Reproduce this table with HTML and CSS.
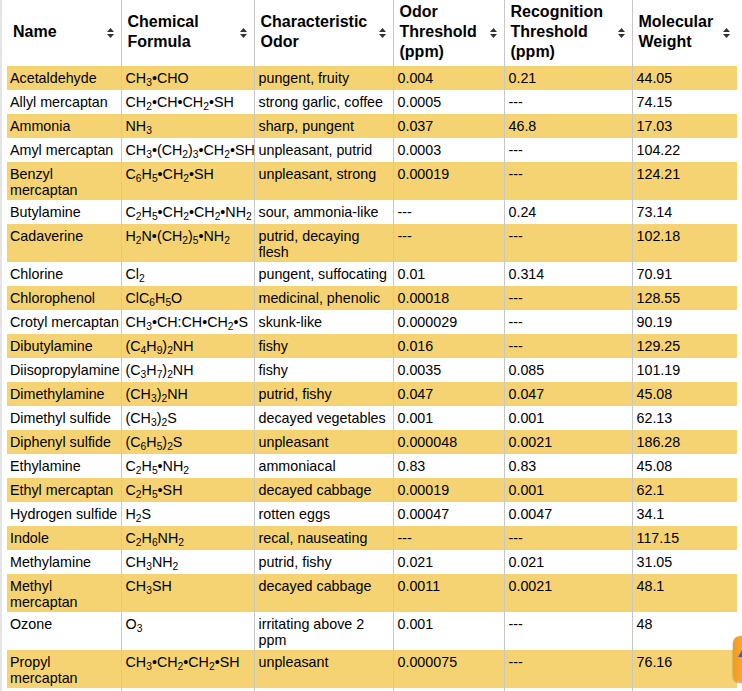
FILE: index.html
```html
<!DOCTYPE html>
<html>
<head>
<meta charset="utf-8">
<title>Odor thresholds</title>
<link rel="stylesheet" href="styles.css">
</head>
<body>
<div class="page">
<table class="odors">
<colgroup>
<col class="c-name"><col class="c-formula"><col class="c-odor"><col class="c-thr"><col class="c-rec"><col class="c-mw">
</colgroup>
<thead>
<tr>
<th>Name<span class="sort"><svg width="7" height="10" viewBox="0 0 7 10"><path d="M3.5 0L7 4H0Z M0 6H7L3.5 10Z" fill="#333"/></svg></span></th>
<th>Chemical Formula<span class="sort"><svg width="7" height="10" viewBox="0 0 7 10"><path d="M3.5 0L7 4H0Z M0 6H7L3.5 10Z" fill="#333"/></svg></span></th>
<th>Characteristic Odor<span class="sort"><svg width="7" height="10" viewBox="0 0 7 10"><path d="M3.5 0L7 4H0Z M0 6H7L3.5 10Z" fill="#333"/></svg></span></th>
<th>Odor Threshold (ppm)<span class="sort"><svg width="7" height="10" viewBox="0 0 7 10"><path d="M3.5 0L7 4H0Z M0 6H7L3.5 10Z" fill="#333"/></svg></span></th>
<th>Recognition Threshold (ppm)<span class="sort"><svg width="7" height="10" viewBox="0 0 7 10"><path d="M3.5 0L7 4H0Z M0 6H7L3.5 10Z" fill="#333"/></svg></span></th>
<th>Molecular Weight<span class="sort"><svg width="7" height="10" viewBox="0 0 7 10"><path d="M3.5 0L7 4H0Z M0 6H7L3.5 10Z" fill="#333"/></svg></span></th>
</tr>
</thead>
<tbody>
<tr class="odd"><td>Acetaldehyde</td><td>CH<sub>3</sub>•CHO</td><td>pungent, fruity</td><td>0.004</td><td>0.21</td><td>44.05</td></tr>
<tr><td>Allyl mercaptan</td><td>CH<sub>2</sub>•CH•CH<sub>2</sub>•SH</td><td>strong garlic, coffee</td><td>0.0005</td><td>---</td><td>74.15</td></tr>
<tr class="odd"><td>Ammonia</td><td>NH<sub>3</sub></td><td>sharp, pungent</td><td>0.037</td><td>46.8</td><td>17.03</td></tr>
<tr><td>Amyl mercaptan</td><td>CH<sub>3</sub>•(CH<sub>2</sub>)<sub>3</sub>•CH<sub>2</sub>•SH</td><td>unpleasant, putrid</td><td>0.0003</td><td>---</td><td>104.22</td></tr>
<tr class="odd"><td>Benzyl mercaptan</td><td>C<sub>6</sub>H<sub>5</sub>•CH<sub>2</sub>•SH</td><td>unpleasant, strong</td><td>0.00019</td><td>---</td><td>124.21</td></tr>
<tr><td>Butylamine</td><td>C<sub>2</sub>H<sub>5</sub>•CH<sub>2</sub>•CH<sub>2</sub>•NH<sub>2</sub></td><td>sour, ammonia-like</td><td>---</td><td>0.24</td><td>73.14</td></tr>
<tr class="odd"><td>Cadaverine</td><td>H<sub>2</sub>N•(CH<sub>2</sub>)<sub>5</sub>•NH<sub>2</sub></td><td>putrid, decaying flesh</td><td>---</td><td>---</td><td>102.18</td></tr>
<tr><td>Chlorine</td><td>Cl<sub>2</sub></td><td>pungent, suffocating</td><td>0.01</td><td>0.314</td><td>70.91</td></tr>
<tr class="odd"><td>Chlorophenol</td><td>ClC<sub>6</sub>H<sub>5</sub>O</td><td>medicinal, phenolic</td><td>0.00018</td><td>---</td><td>128.55</td></tr>
<tr><td>Crotyl mercaptan</td><td>CH<sub>3</sub>•CH:CH•CH<sub>2</sub>•S</td><td>skunk-like</td><td>0.000029</td><td>---</td><td>90.19</td></tr>
<tr class="odd"><td>Dibutylamine</td><td>(C<sub>4</sub>H<sub>9</sub>)<sub>2</sub>NH</td><td>fishy</td><td>0.016</td><td>---</td><td>129.25</td></tr>
<tr><td>Diisopropylamine</td><td>(C<sub>3</sub>H<sub>7</sub>)<sub>2</sub>NH</td><td>fishy</td><td>0.0035</td><td>0.085</td><td>101.19</td></tr>
<tr class="odd"><td>Dimethylamine</td><td>(CH<sub>3</sub>)<sub>2</sub>NH</td><td>putrid, fishy</td><td>0.047</td><td>0.047</td><td>45.08</td></tr>
<tr><td>Dimethyl sulfide</td><td>(CH<sub>3</sub>)<sub>2</sub>S</td><td>decayed vegetables</td><td>0.001</td><td>0.001</td><td>62.13</td></tr>
<tr class="odd"><td>Diphenyl sulfide</td><td>(C<sub>6</sub>H<sub>5</sub>)<sub>2</sub>S</td><td>unpleasant</td><td>0.000048</td><td>0.0021</td><td>186.28</td></tr>
<tr><td>Ethylamine</td><td>C<sub>2</sub>H<sub>5</sub>•NH<sub>2</sub></td><td>ammoniacal</td><td>0.83</td><td>0.83</td><td>45.08</td></tr>
<tr class="odd"><td>Ethyl mercaptan</td><td>C<sub>2</sub>H<sub>5</sub>•SH</td><td>decayed cabbage</td><td>0.00019</td><td>0.001</td><td>62.1</td></tr>
<tr><td>Hydrogen sulfide</td><td>H<sub>2</sub>S</td><td>rotten eggs</td><td>0.00047</td><td>0.0047</td><td>34.1</td></tr>
<tr class="odd"><td>Indole</td><td>C<sub>2</sub>H<sub>6</sub>NH<sub>2</sub></td><td>recal, nauseating</td><td>---</td><td>---</td><td>117.15</td></tr>
<tr><td>Methylamine</td><td>CH<sub>3</sub>NH<sub>2</sub></td><td>putrid, fishy</td><td>0.021</td><td>0.021</td><td>31.05</td></tr>
<tr class="odd"><td>Methyl mercaptan</td><td>CH<sub>3</sub>SH</td><td>decayed cabbage</td><td>0.0011</td><td>0.0021</td><td>48.1</td></tr>
<tr><td>Ozone</td><td>O<sub>3</sub></td><td>irritating above 2 ppm</td><td>0.001</td><td>---</td><td>48</td></tr>
<tr class="odd"><td>Propyl mercaptan</td><td>CH<sub>3</sub>•CH<sub>2</sub>•CH<sub>2</sub>•SH</td><td>unpleasant</td><td>0.000075</td><td>---</td><td>76.16</td></tr>
<tr class="tail"><td></td><td></td><td></td><td></td><td></td><td></td></tr>
</tbody>
</table>
</div>
<a class="to-top" href="#"><svg width="12" height="10" viewBox="0 0 12 10"><path d="M6 0L12 10H0Z" fill="#3b5fc0"/></svg></a>
</body>
</html>
```
FILE: styles.css
```css
html, body {
  margin: 0;
  padding: 0;
  background: #fff;
  overflow: hidden;
}
body {
  font-family: "Liberation Sans", Arial, sans-serif;
  color: #000;
}
.page {
  border-left: 2px solid #e4e4e4;
  padding-left: 5px;
  min-height: 691px;
}
.odors {
  border-collapse: collapse;
  table-layout: fixed;
  width: 730px;
}
.c-name { width: 114px; }
.c-formula { width: 133px; }
.c-odor { width: 139px; }
.c-thr { width: 111px; }
.c-rec { width: 128px; }
.c-mw { width: 105px; }

.odors th {
  position: relative;
  font-size: 16px;
  font-weight: bold;
  line-height: 20px;
  text-align: left;
  vertical-align: middle;
  padding: 2px 20px 4px 6px;
  height: 60px;
  border-right: 1px solid #c8c8c8;
}
.odors th:last-child,
.odors td:last-child { border-right: none; }
.sort {
  position: absolute;
  right: 7px;
  top: 50%;
  margin-top: -5px;
  width: 7px;
  height: 10px;
  display: block;
}
.sort svg { display: block; }

.odors td {
  font-size: 14.3px;
  line-height: 16px;
  height: 18px;
  padding: 4px 1px 2px 4px;
  vertical-align: top;
  border-right: 1px solid #c8c8c8;
}
.odors td:first-child { padding-left: 3px; padding-right: 0; }
.odors tr.odd td { background: #f5d373; }
.odors sub {
  font-size: 0.72em;
  line-height: 0;
  vertical-align: -0.25em;
}
.to-top {
  position: fixed;
  left: 733px;
  top: 636px;
  width: 24px;
  height: 46px;
  border-radius: 7px;
  background: linear-gradient(to right, #f39a1e, #f8b03a 60%, #e8861a);
  box-shadow: 0 1px 2px rgba(0,0,0,0.4);
  display: block;
}
.to-top svg {
  position: absolute;
  left: 5px;
  top: 11px;
}
```
